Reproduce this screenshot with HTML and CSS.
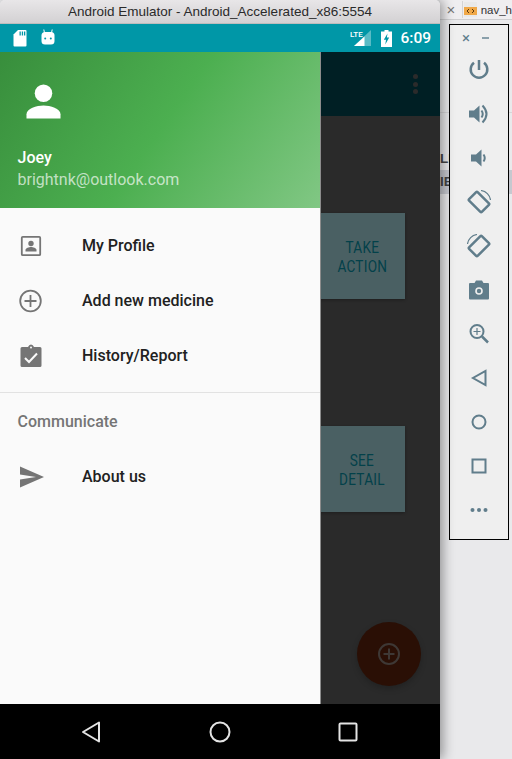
FILE: index.html
```html
<!DOCTYPE html>
<html lang="en">
<head>
<meta charset="utf-8">
<title>Android Emulator</title>
<link rel="stylesheet" href="styles.css">
</head>
<body>
<div class="desktop">
  <main class="window">
    <header class="titlebar">Android Emulator - Android_Accelerated_x86:5554</header>
    <div class="statusbar">
      <div class="status-left">
        <svg class="sb-icon" width="14" height="17" viewBox="0 0 14 17"><path class="fill-white" d="M5 0H12.500Q13.500 0 13.500 1V15.500Q13.500 16.500 12.500 16.500H1.500Q.5 16.500 .5 15.500V4.500Z"/><path class="fill-teal" d="M6.500 1.500h1.300v4H6.500zM8.800 1.500h1.300v4H8.800zM11 1.500h1.300v4H11z"/></svg>
        <svg class="sb-icon sb-robot" width="14" height="17" viewBox="0 0 14 17"><path class="stroke-white" d="M3.500 4 2.800 .5M10.500 4 11.200 .5"/><rect class="fill-white" x=".5" y="3" width="13" height="12.500" rx="3.500"/><circle class="fill-teal" cx="4.200" cy="9.500" r="1"/><circle class="fill-teal" cx="9.800" cy="9.500" r="1"/></svg>
      </div>
      <div class="status-right">
        <svg class="sb-signal" width="22" height="18" viewBox="0 0 22 18"><path class="fill-faint" d="M21 1V17H4Z"/><path class="fill-white" d="M14.500 7.500V17H4Z"/><text class="lte" x="0" y="8">LTE</text></svg>
        <svg class="sb-battery" width="11" height="17" viewBox="0 0 11 17"><path class="fill-white" d="M3.500 0H7.500V1.500H11V17H0V1.500H3.500Z"/><path class="fill-teal" d="M6.500 3.500 2.800 9.800H5L4.300 14.500 8.200 7.600H5.900Z"/></svg>
        <span class="clock">6:09</span>
      </div>
    </div>
    <div class="screen">
      <div class="app">
        <div class="toolbar">
          <span class="menu-dots"><i></i><i></i><i></i></span>
        </div>
        <div class="app-body">
          <div class="card"><span class="card-label">TAKE<br>ACTION</span></div>
          <div class="card"><span class="card-label">SEE<br>DETAIL</span></div>
        </div>
        <div class="fab">
          <svg width="24" height="24" viewBox="0 0 24 24"><circle class="fab-line" cx="12" cy="12" r="10"/><path class="fab-line" d="M12 6.500V17.500M6.500 12H17.500"/></svg>
        </div>
      </div>
      <nav class="drawer">
        <div class="drawer-header">
          <svg class="avatar" width="35" height="35" viewBox="0 0 36 36"><circle class="fill-white" cx="18" cy="9.500" r="9"/><path class="fill-white" d="M.5 35.500V31C.5 25 11 22 18 22S35.500 25 35.500 31V35.500Z"/></svg>
          <div class="user-name">Joey</div>
          <div class="user-mail">brightnk@outlook.com</div>
        </div>
        <ul class="menu">
          <li class="menu-item">
            <svg class="menu-icon" width="24" height="24" viewBox="0 0 24 24"><rect class="icon-line" x="2.800" y="2.800" width="18.400" height="18.400" rx="1"/><circle class="icon-fill" cx="12" cy="9.500" r="2.700"/><path class="icon-fill" d="M6.500 17.500V16C6.500 14 10 13 12 13S17.500 14 17.500 16V17.500Z"/></svg>
            <span>My Profile</span>
          </li>
          <li class="menu-item">
            <svg class="menu-icon" width="24" height="24" viewBox="0 0 24 24"><circle class="icon-line" cx="11.500" cy="12" r="10.300"/><path class="icon-line" d="M11.500 6V18M5.500 12H17.500"/></svg>
            <span>Add new medicine</span>
          </li>
          <li class="menu-item">
            <svg class="menu-icon" width="24" height="24" viewBox="0 0 24 24"><path class="icon-fill" d="M3 3H9Q10 .5 12 .5T15 3H21Q22.500 3 22.500 4.500V21.500Q22.500 23 21 23H3Q1.500 23 1.500 21.500V4.500Q1.500 3 3 3Z"/><circle class="fill-list" cx="12" cy="3.500" r="1"/><path class="check" d="M6 14 10 18 18 9.500"/></svg>
            <span>History/Report</span>
          </li>
        </ul>
        <div class="menu-divider"></div>
        <div class="menu-section">Communicate</div>
        <ul class="menu">
          <li class="menu-item menu-item-about">
            <svg class="menu-icon" width="26" height="24" viewBox="0 0 26 24"><path class="icon-fill" d="M1 1.500 25 12 1 22.500V14.500L17 12 1 9.500Z"/></svg>
            <span>About us</span>
          </li>
        </ul>
      </nav>
    </div>
    <div class="navbar">
      <svg width="20" height="22" viewBox="0 0 20 22"><path class="nav-line" d="M18 1.500V20.500L2 11Z"/></svg>
      <svg width="22" height="22" viewBox="0 0 22 22"><circle class="nav-line" cx="11" cy="11" r="9.500"/></svg>
      <svg width="20" height="20" viewBox="0 0 20 20"><rect class="nav-line" x="1.500" y="1.500" width="17" height="17" rx="1"/></svg>
    </div>
  </main>
  <aside class="ide">
    <div class="ide-tabs">
      <span class="tab-x">×</span>
      <span class="tab-file">
        <svg width="13" height="15" viewBox="0 0 13 15"><rect x="0" y="0" width="13" height="15" fill="#e9e9e9"/><rect x="0" y="5" width="13" height="8" fill="#f0a848"/><path d="M5 7 3 9l2 2M8 7l2 2-2 2" fill="none" stroke="#5a3a10" stroke-width="1"/></svg>
        <span class="tab-name">nav_h</span>
      </span>
    </div>
    <div class="ide-rows">
      <div class="ide-row">LE</div>
      <div class="ide-row ide-row-dark">IE</div>
    </div>
    <div class="tools">
      <div class="tools-head"><span class="tools-x">×</span><span class="tools-min"></span></div>
      <svg class="tool" width="24" height="24" viewBox="0 0 24 24"><path class="tool-line-thick" d="M12 2V12M7 4.800A8.300 8.300 0 1 0 17 4.800"/></svg>
      <svg class="tool" width="24" height="24" viewBox="0 0 24 24"><path class="tool-fill" d="M2 8.500H7L12.500 3.500V20.500L7 15.500H2Z"/><path class="tool-line" d="M14.500 8.500Q17 12 14.500 15.500"/><path class="tool-line" d="M15.500 3.500Q23.500 12 15.500 20.500"/></svg>
      <svg class="tool" width="24" height="24" viewBox="0 0 24 24"><path class="tool-fill" d="M4 8.500H9L14.500 3.500V20.500L9 15.500H4Z"/><path class="tool-line" d="M16.500 8.500Q19 12 16.500 15.500"/></svg>
      <svg class="tool" width="24" height="24" viewBox="0 0 24 24"><rect class="tool-line-thick" x="6" y="3" width="12" height="18" rx="1" transform="rotate(-45 12 12)"/><path class="tool-thin" d="M14 .5A11 11 0 0 1 23.500 10"/></svg>
      <svg class="tool" width="24" height="24" viewBox="0 0 24 24"><rect class="tool-line-thick" x="6" y="3" width="12" height="18" rx="1" transform="rotate(45 12 12)"/><path class="tool-thin" d="M10 .5A11 11 0 0 0 .5 10"/></svg>
      <svg class="tool" width="24" height="24" viewBox="0 0 24 24"><path class="tool-fill" d="M3 5H7.500L9 2.500H15L16.500 5H21Q22 5 22 6V20.500Q22 21.500 21 21.500H3Q2 21.500 2 20.500V6Q2 5 3 5Z"/><circle class="tool-hole" cx="12" cy="13" r="3.800"/><circle class="tool-fill" cx="12" cy="13" r="2.200"/></svg>
      <svg class="tool" width="24" height="24" viewBox="0 0 24 24"><circle class="tool-line" cx="10" cy="9.500" r="6.500"/><path class="tool-line-thick" d="M15 14.500 21 20.500"/><path class="tool-thin" d="M10 6V13M6.500 9.500H13.500"/></svg>
      <svg class="tool" width="24" height="24" viewBox="0 0 24 24"><path class="tool-line" d="M18.500 5V19L6 12Z"/></svg>
      <svg class="tool" width="24" height="24" viewBox="0 0 24 24"><circle class="tool-line" cx="12" cy="12" r="6.500"/></svg>
      <svg class="tool" width="24" height="24" viewBox="0 0 24 24"><rect class="tool-line" x="5.500" y="5.500" width="13" height="13"/></svg>
      <svg class="tool" width="24" height="24" viewBox="0 0 24 24"><circle class="tool-fill" cx="5.500" cy="12" r="2"/><circle class="tool-fill" cx="12" cy="12" r="2"/><circle class="tool-fill" cx="18.500" cy="12" r="2"/></svg>
    </div>
  </aside>
</div>
</body>
</html>
```

FILE: styles.css
```css
* { box-sizing: border-box; }
html, body { margin: 0; padding: 0; }
body { width: 512px; height: 759px; overflow: hidden; background: #e9e9eb; font-family: Roboto, "Noto Sans", sans-serif; }
ul { list-style: none; margin: 0; padding: 0; }

.desktop { display: flex; width: 512px; height: 759px; }

.window { width: 440px; height: 759px; flex: none; display: flex; flex-direction: column; position: relative; z-index: 1; box-shadow: 3px 0 12px rgba(0,0,0,.38); border-radius: 5px 5px 0 0; overflow: hidden; }
.titlebar { height: 24px; flex: none; background: linear-gradient(#e8e6e8, #d3d1d3); border-bottom: 1px solid #bdbdbd; font: 13.500px/23px "Liberation Sans", Arial, sans-serif; color: #2a2a2a; text-align: center; }

.statusbar { height: 28px; flex: none; background: #0097a7; display: flex; justify-content: space-between; align-items: center; padding: 0 9px 0 13px; }
.status-left { display: flex; gap: 14px; align-items: center; }
.sb-robot { margin-top: -2px; }
.status-right { display: flex; align-items: center; }
.sb-signal { margin-right: 9px; }
.sb-battery { margin-right: 8px; }
.clock { color: #fff; font-size: 15.500px; font-weight: 500; }
.lte { font: 500 8px "Roboto", sans-serif; fill: #fff; }
.fill-white { fill: #fff; }
.fill-teal { fill: #0097a7; }
.fill-faint { fill: rgba(255,255,255,.35); }
.fill-list { fill: #fafafa; }
.stroke-white { stroke: #fff; stroke-width: 1; fill: none; }

.screen { position: relative; height: 652px; flex: none; background: #2a2a2a; }
.app { height: 100%; position: relative; display: flex; flex-direction: column; }
.toolbar { height: 64px; flex: none; background: #001f24; display: flex; justify-content: flex-end; align-items: center; padding-right: 22px; }
.menu-dots { display: flex; flex-direction: column; gap: 2.500px; }
.menu-dots i { width: 5px; height: 5px; border-radius: 50%; background: #2b2b2b; }

.app-body { flex: 1; display: flex; flex-direction: column; align-items: flex-end; padding: 97px 35px 0 0; gap: 127px; }
.card { width: 120px; height: 86px; background: #4a6063; box-shadow: 0 1px 3px rgba(0,0,0,.3); display: flex; align-items: center; justify-content: center; padding: 2px 0 0 34px; }
.card-label { font-size: 16px; line-height: 19px; text-align: center; color: #03414a; transform: scaleX(.85); letter-spacing: .3px; }

.fab { position: absolute; left: 357px; top: 570px; width: 64px; height: 64px; border-radius: 50%; background: #2a0f05; display: flex; align-items: center; justify-content: center; box-shadow: 0 3px 6px rgba(0,0,0,.2); }
.fab-line { fill: none; stroke: #3e3835; stroke-width: 2; }

.drawer { position: absolute; left: 0; top: 0; bottom: 0; width: 321px; background: #fafafa; border-right: 1px solid #8c8c8c; }
.drawer-header { height: 156px; background: linear-gradient(125deg, #388e3c 0%, #4caf50 50%, #81c784 100%); padding: 32px 0 0 17.500px; color: #fff; }
.avatar { display: block; margin-left: 8px; }
.user-name { margin-top: 29px; font-size: 16px; line-height: 20px; font-weight: 500; }
.user-mail { margin-top: 2px; font-size: 16px; line-height: 20px; color: rgba(255,255,255,.68); }

.menu { padding: 10px 0 0; }
.menu-item { height: 55px; display: flex; align-items: center; padding-left: 19px; font-size: 16px; font-weight: 500; color: #212121; }
.menu-item span { margin-left: 39px; }
.menu-item-about span { margin-left: 37px; }
.menu-icon { flex: none; }
.icon-line { fill: none; stroke: #757575; stroke-width: 1.800; }
.icon-fill { fill: #757575; }
.check { fill: none; stroke: #fafafa; stroke-width: 2; }

.menu-divider { height: 1px; background: #e2e2e2; margin-top: 9px; }
.menu-section { height: 56px; padding: 19px 0 0 17.500px; font-size: 16px; line-height: 20px; font-weight: 500; color: #757575; }
.menu-section + .menu { padding: 0; }

.navbar { flex: 1; background: #000; display: flex; align-items: center; padding: 0 0 0 81px; gap: 107.500px; }
.nav-line { fill: none; stroke: #e4e4e4; stroke-width: 2; stroke-linejoin: round; }

.ide { flex: 1; position: relative; background: #e9e9eb; overflow: hidden; }
.ide-tabs { height: 20px; background: #efeef0; border-bottom: 1px solid #cfcfd1; display: flex; align-items: center; font: 11.500px "Liberation Sans", Arial, sans-serif; color: #333; }
.tab-x { width: 24px; text-align: center; color: #777; font-size: 15px; border-right: 1px solid #d4d4d4; }
.tab-file { display: flex; align-items: center; gap: 4px; margin-left: 1px; white-space: nowrap; }
.ide-rows { margin-top: 92px; padding-top: 36px; border-top: 1px solid #d6d6d8; font: 700 13.500px/20px "Liberation Sans", Arial, sans-serif; color: #444; }
.ide-row { height: 20px; }
.ide-row-dark { height: 24px; margin-top: 1px; line-height: 24px; background: #c6c8cf; }

.tools { position: absolute; left: 9px; top: 24px; width: 60px; height: 516px; background: #efefef; border: 1px solid #000; display: flex; flex-direction: column; align-items: center; padding-top: 33px; gap: 20px; }
.tools-head { position: absolute; left: 12px; top: 6px; display: flex; align-items: center; gap: 12px; }
.tools-x { color: #5f7d8c; font-size: 15px; line-height: 14px; }
.tools-min { width: 7px; height: 1.500px; background: #8aa0ab; }
.tool { flex: none; }
.tool-line { fill: none; stroke: #607d8b; stroke-width: 2; }
.tool-line-thick { fill: none; stroke: #607d8b; stroke-width: 2.500; }
.tool-thin { fill: none; stroke: #607d8b; stroke-width: 1.200; }
.tool-fill { fill: #607d8b; }
.tool-hole { fill: #efefef; stroke: none; }
```
